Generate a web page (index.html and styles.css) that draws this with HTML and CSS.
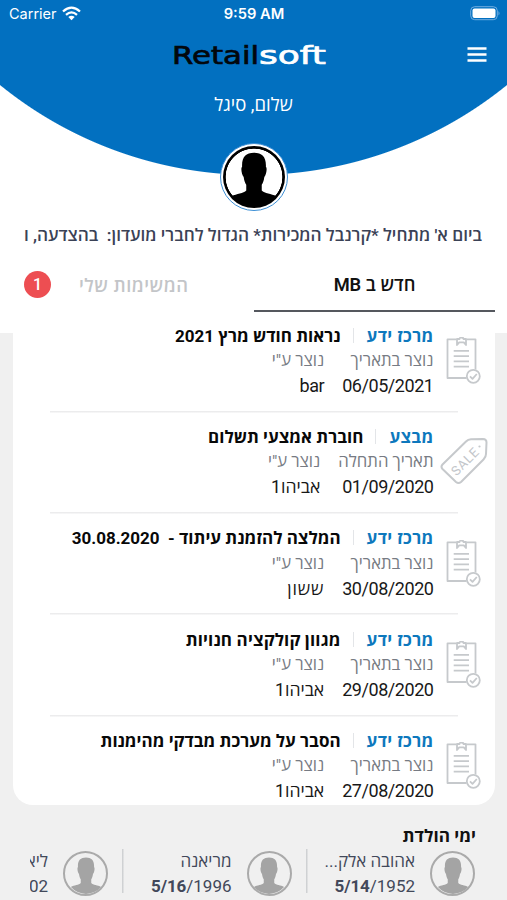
FILE: index.html
```html
<!DOCTYPE html>
<html lang="he" dir="rtl">
<head>
<meta charset="utf-8">
<title>Retailsoft</title>
<link rel="stylesheet" href="styles.css">
</head>
<body>
<svg class="defs" width="0" height="0" aria-hidden="true">
  <symbol id="clip" viewBox="0 0 36 48">
    <g fill="none" stroke="currentColor" stroke-width="1.8" stroke-linejoin="round">
      <path d="M11.500 2.300H2.500V41H21.500M21.500 2.300H30.500V32.500"/>
      <path d="M12 8V2h2.500q0-1.500 2-1.500t2 1.500H21V8L18.800 5.400H14.200z"/>
      <path d="M8.700 13.900H24M8.700 19.100H24M8.700 24.400H24M8.700 29.700H24"/>
      <circle cx="28.300" cy="39.300" r="6.500"/>
      <path d="M25 39.300l2.500 2.500 4.300-4.800"/>
    </g>
  </symbol>
  <symbol id="person" viewBox="0 0 60 60">
    <path d="M30 6.500C22 6.500 18 11 18.500 20C17 21 18 28 20 30C20.500 34 21.500 36 22.500 37.500V43C20 46 13 46 8.500 48.500A28.300 28.300 0 0 0 51.500 48.500C47 46 40 46 37.500 43V37.500C38.500 36 39.500 34 40 30C42 28 43 21 41.500 20C42 11 38 6.500 30 6.500Z" fill="currentColor"/>
  </symbol>
</svg>
<div class="phone">
  <header class="hero">
    <div class="status" dir="ltr">
      <div class="carrier"><span>Carrier</span>
        <svg width="19" height="15" viewBox="0 0 19 15"><g fill="none" stroke="#fff" stroke-width="2.3"><path d="M1 5.500Q9.500-2.200 18 5.500"/><path d="M4 8.800Q9.500 3.900 15 8.800"/></g><path d="M6.300 11Q9.500 8.400 12.700 11L9.500 14.200Z" fill="#fff"/></svg>
      </div>
      <div class="clock">9:59 AM</div>
      <svg class="battery" width="31" height="15" viewBox="0 0 31 15"><rect x=".7" y=".7" width="26.600" height="13" rx="4" fill="none" stroke="#72ade0"/><rect x="2.500" y="2.500" width="23" height="9.500" rx="2" fill="#fff"/><path d="M28.500 5v4.500q2-2.200 0-4.500" fill="#72ade0"/></svg>
    </div>
    <div class="brandbar">
      <svg class="menu" width="20" height="15" viewBox="0 0 20 15"><path d="M.5 1.500h19M.5 7.500h19M.5 13.500h19" stroke="#fff" stroke-width="2.300"/></svg>
      <svg class="logo" width="156" height="30" viewBox="0 -3 156 30"><text x="1" y="20.500" textLength="87" lengthAdjust="spacingAndGlyphs" class="logo-a">Retail</text><text x="88" y="20.500" textLength="67" lengthAdjust="spacingAndGlyphs" class="logo-b">soft</text></svg>
    </div>
    <div class="hello">שלום, סיגל</div>
    <div class="avatar"><svg class="face"><use href="#person"/></svg></div>
  </header>
  <div class="ticker"><span>ביום א' מתחיל *קרנבל המכירות* הגדול לחברי מועדון:&nbsp; בהצדעה, ו</span></div>
  <nav class="tabs">
    <div class="tab on"><span>חדש ב MB</span></div>
    <div class="tab"><span>המשימות שלי</span><b class="count">1</b></div>
  </nav>
  <main class="card">
    <article class="item"><svg class="ico"><use href="#clip"/></svg><div class="body">
      <h3><em>מרכז ידע</em><i></i><span>נראות חודש מרץ 2021</span></h3>
      <div class="cols"><dl><dt>נוצר בתאריך</dt><dd>06/05/2021</dd></dl><dl><dt>נוצר ע"י</dt><dd>bar</dd></dl></div></div></article>
    <article class="item"><svg class="tag" viewBox="0 0 48 48"><path d="M2.500 26.500L26 3.500Q28 1.500 31 1.300L43 1Q46.500 1 46.500 4.500L46 16Q46 19 43.500 21.500L21 44Q18.500 46 16 44L2.500 31Q.5 28.800 2.500 26.500Z" fill="none" stroke="currentColor" stroke-width="2" stroke-linejoin="round"/><circle cx="39.500" cy="8.500" r="1.100" fill="currentColor"/><text transform="translate(16.500 38.500) rotate(-45)" class="sale" textLength="33">SALE</text></svg><div class="body">
      <h3><em>מבצע</em><i></i><span>חוברת אמצעי תשלום</span></h3>
      <div class="cols"><dl><dt>תאריך התחלה</dt><dd>01/09/2020</dd></dl><dl><dt>נוצר ע"י</dt><dd class="heb">אביהו1</dd></dl></div></div></article>
    <article class="item"><svg class="ico"><use href="#clip"/></svg><div class="body">
      <h3><em>מרכז ידע</em><i></i><span>המלצה להזמנת עיתוד -&nbsp; 30.08.2020</span></h3>
      <div class="cols"><dl><dt>נוצר בתאריך</dt><dd>30/08/2020</dd></dl><dl><dt>נוצר ע"י</dt><dd class="heb wide">ששון</dd></dl></div></div></article>
    <article class="item"><svg class="ico"><use href="#clip"/></svg><div class="body">
      <h3><em>מרכז ידע</em><i></i><span class="spread">מגוון קולקציה חנויות</span></h3>
      <div class="cols"><dl><dt>נוצר בתאריך</dt><dd>29/08/2020</dd></dl><dl><dt>נוצר ע"י</dt><dd class="heb">אביהו1</dd></dl></div></div></article>
    <article class="item"><svg class="ico"><use href="#clip"/></svg><div class="body">
      <h3><em>מרכז ידע</em><i></i><span>הסבר על מערכת מבדקי מהימנות</span></h3>
      <div class="cols"><dl><dt>נוצר בתאריך</dt><dd>27/08/2020</dd></dl><dl><dt>נוצר ע"י</dt><dd class="heb">אביהו1</dd></dl></div></div></article>
  </main>
  <section class="birthdays">
    <h2>ימי הולדת</h2>
    <div class="people">
      <div class="person"><div class="pic"><svg class="face"><use href="#person"/></svg></div><div class="who"><span>אהובה אלק...</span><span dir="ltr"><b>5/14</b>/1952</span></div></div>
      <div class="person"><div class="pic"><svg class="face"><use href="#person"/></svg></div><div class="who"><span>מריאנה</span><span dir="ltr"><b>5/16</b>/1996</span></div></div>
      <div class="person"><div class="pic"><svg class="face"><use href="#person"/></svg></div><div class="who"><span>ליא</span><span dir="ltr">02</span></div></div>
    </div>
  </section>
</div>
</body>
</html>
```
FILE: styles.css
```css
* { box-sizing: border-box; margin: 0; padding: 0; }
body { width: 507px; height: 900px; overflow: hidden; background: #f0f0f0; font-family: Roboto, "Open Sans", "Noto Sans", sans-serif; font-size: 18px; color: #111; }
.defs { display: block; position: absolute; }
.phone { height: 900px; overflow: hidden; background: linear-gradient(#fff 333px, #f0f0f0 333px); }
.hero { height: 211px; background: radial-gradient(circle 402px at 253.500px -227px, #0270c0 401.500px, #fff 402.500px); color: #fff; }
.status { display: grid; grid-template-columns: 1fr auto 1fr; align-items: center; height: 28px; padding: 0 6px 0 9px; }
.carrier { display: flex; align-items: center; gap: 6px; font-family: Inter, sans-serif; font-size: 14.500px; margin-top: -1px; }
.carrier svg { margin: -1px 0 0 -1px; }
.clock { font: 600 14.700px Inter, sans-serif; padding-right: 2px; }
.battery { justify-self: end; margin-top: -2px; }
.brandbar { display: grid; grid-template-columns: 40px 1fr 40px; align-items: center; height: 54px; }
.menu { margin-right: 20px; margin-top: -1px; }
.logo { justify-self: center; margin-right: 9px; }
.logo text { font-family: "DejaVu Sans", sans-serif; font-size: 24.500px; direction: ltr; stroke-width: .7px; }
.logo-a { fill: #02070c; stroke: #02070c; }
.logo-b { fill: #fff; stroke: #fff; }
.hello { height: 60px; line-height: 47px; text-align: center; font-size: 18.500px; }
.avatar { width: 68px; height: 68px; margin: 1px auto 0; border: 1.500px solid #3c8fd6; border-radius: 50%; background: #fff; color: #000; display: flex; align-items: center; justify-content: center; }
.avatar .face { width: 62px; height: 62px; border-radius: 50%; background: radial-gradient(circle closest-side, #fff 28px, #000 28.600px); flex: none; }
.ticker { height: 48px; line-height: 48px; padding-right: 25px; white-space: nowrap; color: #3b4256; font-weight: 600; font-size: 17.200px; }
.tabs { display: flex; height: 53px; padding: 0 12px; }
.tab { width: 241px; height: 53px; padding-bottom: 3px; display: flex; align-items: center; justify-content: center; color: #c3c5c8; font-weight: 600; }
.tab.on { color: #111; font-size: 18.300px; border-bottom: 2px solid #55585e; padding-bottom: 2px; }
.tab:not(.on) { justify-content: flex-end; gap: 28px; padding-left: 11px; }
.tab:not(.on) span { font-size: 18.300px; letter-spacing: .5px; }
.count { width: 27px; height: 27px; border-radius: 50%; background: #ed4e52; color: #fff; text-align: center; line-height: 27px; font-size: 16px; font-weight: 500; }
.card { width: 482px; height: 493px; margin: 0 auto; background: #fff; border-radius: 0 0 20px 20px; overflow: hidden; }
.item { height: 101.350px; display: flex; align-items: flex-start; padding-right: 14px; color: #c6c9cc; }
.item:not(:last-child) { background: linear-gradient(#ececed, #ececed) 37px 98.500px / 408px 1.500px no-repeat; }
.ico { width: 36px; height: 48px; margin-top: 25px; flex: none; }
.tag { width: 48px; height: 48px; margin: 25px -7px 0 -5px; flex: none; }
.sale { font: 400 13px Roboto; fill: #c3c6ca; direction: ltr; }
.body { flex: 1; padding: 10px 11px 0 0; }
h3 { display: flex; align-items: center; height: 26px; font-size: 17px; font-weight: 700; color: #080808; white-space: nowrap; }
h3 em { font-style: normal; color: #0d78bd; letter-spacing: .3px; }
h3 i { width: 1px; height: 15px; margin: 0 13px 0 12px; background: #e3e5e8; }
.spread { letter-spacing: .15px; }
.cols { display: flex; gap: 18px; }
dt { height: 25px; line-height: 26px; color: #777b83; font-size: 16.700px; white-space: nowrap; }
dd { height: 25px; line-height: 26px; color: #181818; font-size: 18px; letter-spacing: -.45px; }
dd.heb { font-size: 17.600px; letter-spacing: 0; }
dd.wide { letter-spacing: .8px; }
.birthdays { padding: 17px 31px 0 30px; }
h2 { height: 27px; line-height: 28px; font-size: 17.200px; font-weight: 700; }
.people { display: flex; overflow: hidden; height: 51px; padding-right: 1px; }
.person { flex: none; width: 183.500px; display: flex; }
.pic { width: 45px; height: 45px; margin: 2px 0 0 15px; border: 2px solid #aaa; border-radius: 50%; color: #a4a4a4; flex: none; display: flex; align-items: center; justify-content: center; }
.pic .face { width: 42px; height: 42px; flex: none; }
.who { flex: 1; display: flex; flex-direction: column; align-items: flex-start; line-height: 25px; color: #42485a; white-space: nowrap; font-size: 17px; }
.who b { letter-spacing: -.1px; }
.person:not(:last-child) .who { background: linear-gradient(#cfd1d3, #cfd1d3) 14px 0 / 1.500px 44px no-repeat; }
```
